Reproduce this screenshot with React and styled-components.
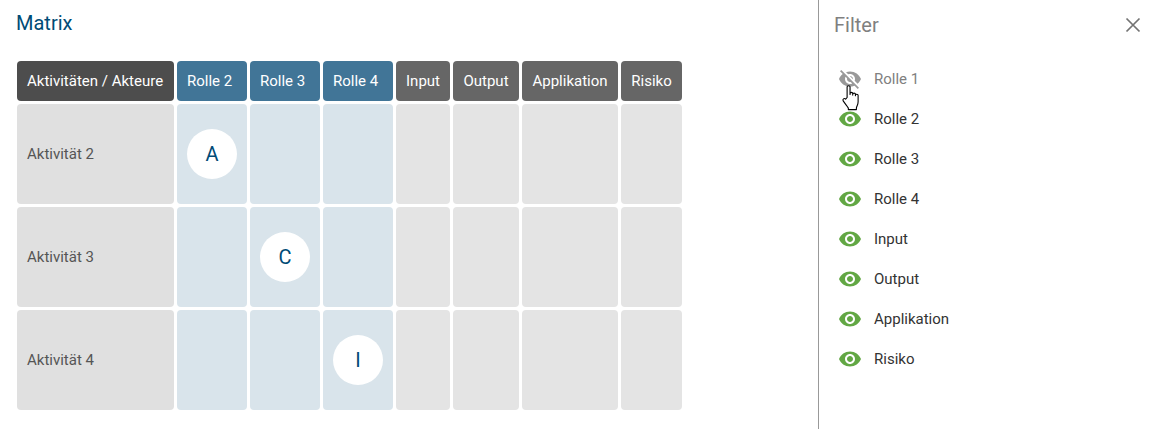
import React from "react";
import styled, { createGlobalStyle } from "styled-components";

const GlobalStyle = createGlobalStyle`
  html, body {
    margin: 0;
    padding: 0;
    background: #fff;
    font-family: Roboto, "Liberation Sans", sans-serif;
  }
`;

const Page = styled.div`
  display: flex;
  width: 1154px;
  height: 429px;
  overflow: hidden;
`;

const Main = styled.main`
  width: 818px;
  padding: 11px 0 0 17px;
  box-sizing: border-box;
`;

const Title = styled.h1`
  margin: 0 0 26px -1px;
  height: 24px;
  font-size: 20px;
  line-height: 24px;
  font-weight: 400;
  color: #004b76;
`;

const Grid = styled.div`
  display: grid;
  grid-template-columns: 157px 70px 70px 70px 54px 66px 96px 61px;
  grid-template-rows: 40px 100px 100px 100px;
  gap: 3px;
`;

const headBackgrounds = {
  corner: "#4d4d4d",
  role: "#417597",
  other: "#666666",
};

const HeadCell = styled.div`
  display: flex;
  align-items: center;
  justify-content: ${(p) => (p.$kind === "other" ? "center" : "flex-start")};
  padding: ${(p) => (p.$kind === "other" ? "0" : "0 10px")};
  border-radius: 4px;
  background: ${(p) => headBackgrounds[p.$kind]};
  color: #fff;
  font-size: 15px;
  font-weight: 400;
  white-space: nowrap;
`;

const RowLabel = styled.div`
  display: flex;
  align-items: center;
  padding: 0 10px;
  border-radius: 4px;
  background: #e0e0e0;
  color: #555;
  font-size: 15px;
`;

const Cell = styled.div`
  display: flex;
  align-items: center;
  padding: 0 10px;
  border-radius: 4px;
  background: ${(p) => (p.$role ? "#d9e4eb" : "#e4e4e4")};
`;

const Badge = styled.div`
  display: flex;
  align-items: center;
  justify-content: center;
  flex: none;
  width: 50px;
  height: 50px;
  border-radius: 50%;
  background: #fff;
  color: #004b76;
  font-size: 20px;
`;

const Panel = styled.aside`
  position: relative;
  flex: 1;
  border-left: 1px solid #999;
  padding: 0 0 0 15px;
`;

const PanelHeader = styled.header`
  display: flex;
  align-items: center;
  justify-content: space-between;
  height: 50px;
  padding-right: 12px;
`;

const PanelTitle = styled.h2`
  margin: 0;
  font-size: 20px;
  font-weight: 400;
  color: #808080;
`;

const CloseButton = styled.button`
  display: flex;
  width: 18px;
  height: 18px;
  padding: 0;
  border: 0;
  background: none;
  color: #737373;
`;

const FilterList = styled.ul`
  margin: 9px 0 0;
  padding: 0;
  list-style: none;
`;

const FilterItem = styled.li`
  display: flex;
  align-items: center;
  gap: 12px;
  height: 40px;
  padding-left: 4px;
  font-size: 15px;
  color: ${(p) => (p.$hidden ? "#808080" : "#333")};

  svg {
    flex: none;
    color: ${(p) => (p.$hidden ? "#999" : "#62a744")};
  }
`;

const Cursor = styled.svg`
  position: absolute;
  left: 22px;
  top: 83px;
`;

const EyeIcon = () => (
  <svg width="24" height="24" viewBox="0 0 24 24" fill="currentColor">
    <path d="M12 4.5C7 4.5 2.73 7.61 1 12c1.73 4.39 6 7.5 11 7.5s9.27-3.11 11-7.5c-1.73-4.39-6-7.5-11-7.5zM12 17c-2.76 0-5-2.24-5-5s2.24-5 5-5 5 2.24 5 5-2.24 5-5 5zm0-8c-1.66 0-3 1.34-3 3s1.34 3 3 3 3-1.34 3-3-1.34-3-3-3z" />
  </svg>
);

const EyeOffIcon = () => (
  <svg width="24" height="24" viewBox="0 0 24 24" fill="currentColor">
    <path d="M12 7c2.76 0 5 2.24 5 5 0 .65-.13 1.26-.36 1.83l2.92 2.92c1.51-1.26 2.7-2.89 3.43-4.75-1.73-4.39-6-7.5-11-7.5-1.4 0-2.74.25-3.98.7l2.16 2.16C10.74 7.13 11.35 7 12 7zM2 4.27l2.28 2.28.46.46C3.08 8.3 1.78 10.02 1 12c1.73 4.39 6 7.5 11 7.5 1.55 0 3.03-.3 4.38-.84l.42.42L19.73 22 21 20.73 3.27 3 2 4.27zM7.53 9.8l1.55 1.55c-.05.21-.08.43-.08.65 0 1.66 1.34 3 3 3 .22 0 .44-.03.65-.08l1.55 1.55c-.67.33-1.41.53-2.2.53-2.76 0-5-2.24-5-5 0-.79.2-1.53.53-2.2zm4.31-.78l3.15 3.15.02-.16c0-1.66-1.34-3-3-3l-.17.01z" />
  </svg>
);

const roles = ["Rolle 2", "Rolle 3", "Rolle 4"];
const others = ["Input", "Output", "Applikation", "Risiko"];
const rows = [
  { name: "Aktivität 2", column: 0, letter: "A" },
  { name: "Aktivität 3", column: 1, letter: "C" },
  { name: "Aktivität 4", column: 2, letter: "I" },
];
const filters = ["Rolle 2", "Rolle 3", "Rolle 4", ...others];

export default function App() {
  return (
    <>
      <GlobalStyle />
      <Page>
        <Main>
          <Title>Matrix</Title>
          <Grid>
            <HeadCell $kind="corner">Aktivitäten / Akteure</HeadCell>
            {roles.map((r) => (
              <HeadCell key={r} $kind="role">{r}</HeadCell>
            ))}
            {others.map((o) => (
              <HeadCell key={o} $kind="other">{o}</HeadCell>
            ))}
            {rows.map((row) => (
              <React.Fragment key={row.name}>
                <RowLabel>{row.name}</RowLabel>
                {roles.map((r, i) => (
                  <Cell key={r} $role>
                    {i === row.column && <Badge>{row.letter}</Badge>}
                  </Cell>
                ))}
                {others.map((o) => (
                  <Cell key={o} />
                ))}
              </React.Fragment>
            ))}
          </Grid>
        </Main>
        <Panel>
          <PanelHeader>
            <PanelTitle>Filter</PanelTitle>
            <CloseButton aria-label="Schließen">
              <svg width="18" height="18" viewBox="0 0 18 18" fill="none" stroke="currentColor" strokeWidth="1.7">
                <path d="M2.5 2.5l13 13M15.5 2.5l-13 13" />
              </svg>
            </CloseButton>
          </PanelHeader>
          <FilterList>
            <FilterItem $hidden>
              <EyeOffIcon />
              Rolle 1
            </FilterItem>
            {filters.map((f) => (
              <FilterItem key={f}>
                <EyeIcon />
                {f}
              </FilterItem>
            ))}
          </FilterList>
          <Cursor width="22" height="29" viewBox="0 0 18 24" preserveAspectRatio="none">
            <path
              d="M5 12V3.2C5 2 7.4 2 7.4 3.2V9.5V8.6C7.4 7.5 9.6 7.5 9.6 8.6V10V9.2C9.6 8.1 11.8 8.1 11.8 9.2V10.6V10C11.8 9 14 9 14 10.2V15.5C14 18 13 19 12.6 20.5V22H6V20.8C5 19 3.5 17.5 1.8 14.8C1 13.4 2.6 12.2 3.8 13.3Z"
              fill="#fff"
              stroke="#000"
              strokeWidth="0.9"
              strokeLinejoin="round"
            />
          </Cursor>
        </Panel>
      </Page>
    </>
  );
}
